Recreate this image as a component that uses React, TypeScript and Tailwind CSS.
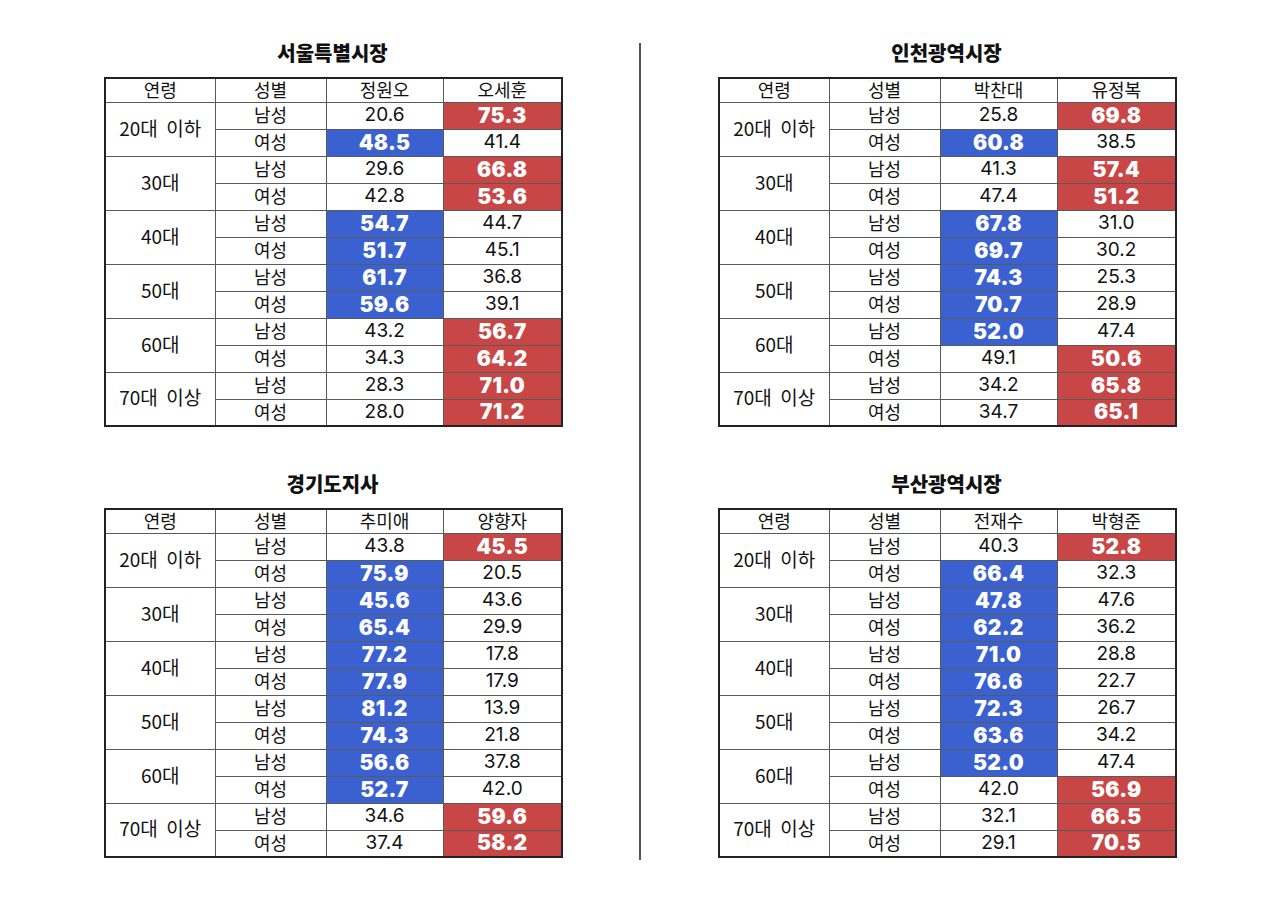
import React from 'react';

type Row = [string, number, number, number, number];

interface Region {
  title: string;
  candidates: [string, string];
  rows: Row[];
}

const AGES = ['20대  이하', '30대', '40대', '50대', '60대', '70대  이상'];

// [age index, 남성 a, 남성 b, 여성 a, 여성 b]
const regions: Region[] = [
  {
    title: '서울특별시장',
    candidates: ['정원오', '오세훈'],
    rows: [
      ['0', 20.6, 75.3, 48.5, 41.4],
      ['1', 29.6, 66.8, 42.8, 53.6],
      ['2', 54.7, 44.7, 51.7, 45.1],
      ['3', 61.7, 36.8, 59.6, 39.1],
      ['4', 43.2, 56.7, 34.3, 64.2],
      ['5', 28.3, 71.0, 28.0, 71.2],
    ],
  },
  {
    title: '인천광역시장',
    candidates: ['박찬대', '유정복'],
    rows: [
      ['0', 25.8, 69.8, 60.8, 38.5],
      ['1', 41.3, 57.4, 47.4, 51.2],
      ['2', 67.8, 31.0, 69.7, 30.2],
      ['3', 74.3, 25.3, 70.7, 28.9],
      ['4', 52.0, 47.4, 49.1, 50.6],
      ['5', 34.2, 65.8, 34.7, 65.1],
    ],
  },
  {
    title: '경기도지사',
    candidates: ['추미애', '양향자'],
    rows: [
      ['0', 43.8, 45.5, 75.9, 20.5],
      ['1', 45.6, 43.6, 65.4, 29.9],
      ['2', 77.2, 17.8, 77.9, 17.9],
      ['3', 81.2, 13.9, 74.3, 21.8],
      ['4', 56.6, 37.8, 52.7, 42.0],
      ['5', 34.6, 59.6, 37.4, 58.2],
    ],
  },
  {
    title: '부산광역시장',
    candidates: ['전재수', '박형준'],
    rows: [
      ['0', 40.3, 52.8, 66.4, 32.3],
      ['1', 47.8, 47.6, 62.2, 36.2],
      ['2', 71.0, 28.8, 76.6, 22.7],
      ['3', 72.3, 26.7, 63.6, 34.2],
      ['4', 52.0, 47.4, 42.0, 56.9],
      ['5', 32.1, 66.5, 29.1, 70.5],
    ],
  },
];

const kr = "font-['Noto_Sans_CJK_KR','Noto_Sans',sans-serif]";
const cell = 'border border-[#5a5a5a] px-0 pt-0 text-center align-middle';

const Value = ({ v, win, side }: { v: number; win: boolean; side: 'a' | 'b' }) => {
  if (!win) {
    return (
      <td className={`${cell} pb-[2px] text-[19px] text-[#111] font-['Inter',sans-serif] font-normal`}>
        {v.toFixed(1)}
      </td>
    );
  }
  return (
    <td
      className={`${cell} pb-[1px] text-[21px] tracking-[0.3px] text-white font-['Inter',sans-serif] font-black ${
        side === 'a' ? 'bg-[#3b60cf]' : 'bg-[#c84646]'
      }`}
    >
      {v.toFixed(1)}
    </td>
  );
};

const ResultTable = ({ region }: { region: Region }) => (
  <div className="w-[457px]">
    <h2 className={`${kr} text-center text-[20px] font-black leading-[22px] text-[#111] mb-[13px]`}>
      {region.title}
    </h2>
    <table className={`${kr} w-[457px] border-collapse border-2 border-[#222] table-fixed leading-none`}>
      <colgroup>
        <col className="w-[110px]" />
        <col className="w-[111px]" />
        <col className="w-[117px]" />
        <col className="w-[119px]" />
      </colgroup>
      <thead>
        <tr className="h-[24px] text-[18px] text-[#111]">
          <th className={`${cell} pb-[3px] font-normal`}>연령</th>
          <th className={`${cell} pb-[3px] font-normal`}>성별</th>
          <th className={`${cell} pb-[3px] font-normal`}>{region.candidates[0]}</th>
          <th className={`${cell} pb-[3px] font-normal`}>{region.candidates[1]}</th>
        </tr>
      </thead>
      <tbody>
        {region.rows.map((r) => {
          const [age, ma, mb, fa, fb] = r;
          return (
            <React.Fragment key={age}>
              <tr className="h-[27px]">
                <td rowSpan={2} className={`${cell} pb-[4px] text-[19px] text-[#111] whitespace-pre`}>
                  {AGES[Number(age)]}
                </td>
                <td className={`${cell} pb-[3px] text-[18px] text-[#111]`}>남성</td>
                <Value v={ma} win={ma > mb} side="a" />
                <Value v={mb} win={mb > ma} side="b" />
              </tr>
              <tr className="h-[27px]">
                <td className={`${cell} pb-[3px] text-[18px] text-[#111]`}>여성</td>
                <Value v={fa} win={fa > fb} side="a" />
                <Value v={fb} win={fb > fa} side="b" />
              </tr>
            </React.Fragment>
          );
        })}
      </tbody>
    </table>
  </div>
);

export default function App() {
  return (
    <div className="w-[1280px] h-[906px] bg-white flex pt-[42px] pl-[104px]">
      <div className="flex flex-col gap-[46px]">
        <ResultTable region={regions[0]} />
        <ResultTable region={regions[2]} />
      </div>
      <div className="w-[2px] h-[817px] bg-[#555] ml-[78px] mr-[77px] mt-[1px]" />
      <div className="flex flex-col gap-[46px]">
        <ResultTable region={regions[1]} />
        <ResultTable region={regions[3]} />
      </div>
    </div>
  );
}
